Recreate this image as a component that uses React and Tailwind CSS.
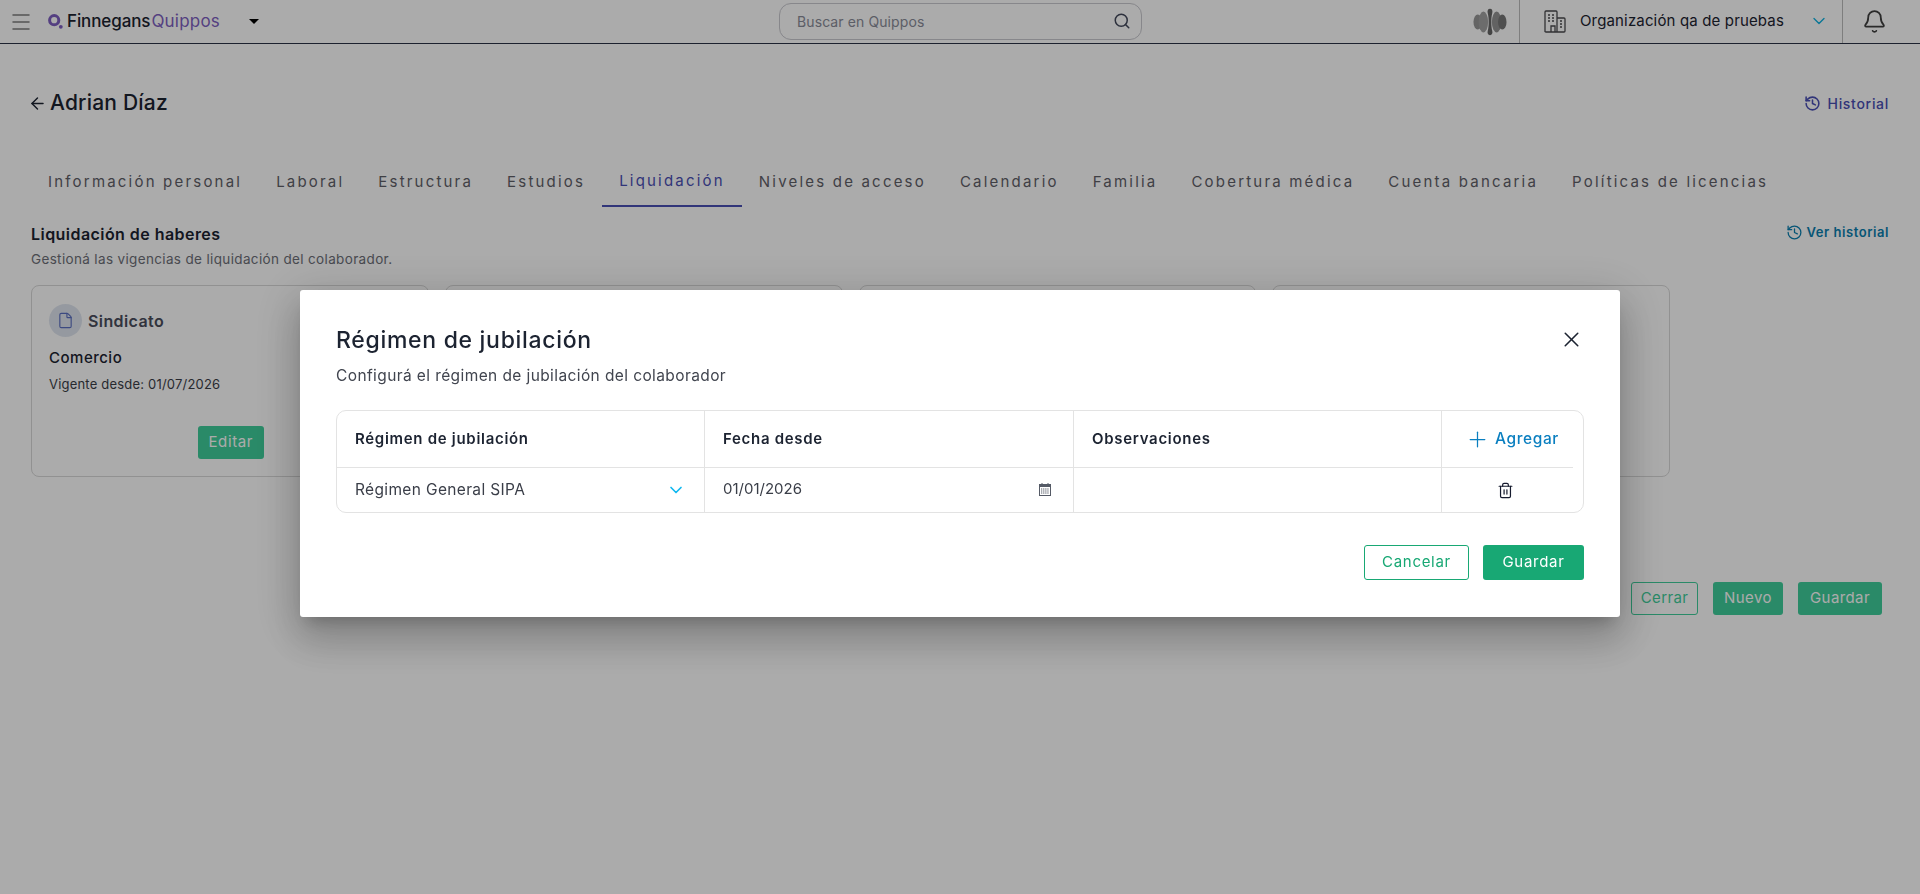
import { ArrowLeft, Bell, ChevronDown, File, History, Menu, Plus, Search, Trash2, X } from 'lucide-react';

const tabs = [
  'Información personal',
  'Laboral',
  'Estructura',
  'Estudios',
  'Liquidación',
  'Niveles de acceso',
  'Calendario',
  'Familia',
  'Cobertura médica',
  'Cuenta bancaria',
  'Políticas de licencias',
];

const LogoMark = () => (
  <svg width="15" height="15" viewBox="0 0 15 15" fill="none">
    <circle cx="6.200" cy="6.200" r="4.600" stroke="#7e5fc0" strokeWidth="3" />
    <circle cx="12.800" cy="12.800" r="1.900" fill="#7e5fc0" />
  </svg>
);

const BrainMark = () => (
  <svg width="34" height="30" viewBox="0 0 36 30">
    <ellipse cx="5" cy="15" rx="4.5" ry="8" fill="#979797" />
    <ellipse cx="11" cy="15" rx="5" ry="11" fill="#a2a2a2" />
    <ellipse cx="25" cy="15" rx="5" ry="11" fill="#939393" />
    <ellipse cx="31" cy="15" rx="4.5" ry="8" fill="#767676" />
    <path d="M18 1c2.200 0 3 2.200 2.400 4.400-.8 3-1 6-1 9.600s.2 6.600 1 9.600C21 26.800 20.200 29 18 29s-3-2.200-2.400-4.400c.8-3 1-6 1-9.600s-.2-6.600-1-9.600C15 3.200 15.800 1 18 1z" fill="#666" />
  </svg>
);

const BuildingIcon = () => (
  <svg width="22" height="23" viewBox="0 0 22 23" fill="none" stroke="#4b4b4f" strokeWidth="1.300">
    <path d="M1 22V2a1 1 0 0 1 1-1h10a1 1 0 0 1 1 1v20M13 8h7a1 1 0 0 1 1 1v12a1 1 0 0 1-1 1H2a1 1 0 0 1-1-1" />
    <path d="M7 22v-6h4v6M4 5h2M8 5h2M4 8h2M8 8h2M4 11h2M8 11h2M16 11h2M16 14h2M16 17h2" />
  </svg>
);

const CalendarIcon = () => (
  <svg width="12" height="13" viewBox="0 0 12 13" fill="none">
    <path d="M3 0v2M9 0v2" stroke="#555a66" strokeWidth="1" />
    <rect x="0.500" y="1.500" width="11" height="11" stroke="#555a66" fill="#fff" />
    <rect x="0.500" y="1.500" width="11" height="2.500" fill="#555a66" />
    <path d="M2 6h8M2 8h8M2 10h8" stroke="#555a66" strokeWidth="1" strokeDasharray="1.300 0.800" />
  </svg>
);

const PageButton = ({ className, children }) => (
  <button className={`h-[33px] rounded-[3px] text-[15px] tracking-[0.4px] ${className}`}>{children}</button>
);

export default function App() {
  return (
    <div className="relative h-[894px] overflow-hidden bg-white font-['Inter','Noto_Sans',sans-serif] text-[#1c2331]">
      <header className="flex h-[44px] items-stretch border-b border-[#2a3245]">
        <div className="flex w-[779px] items-center">
          <Menu className="ml-[9px] h-[24px] w-[24px] text-[#7d7d7d]" strokeWidth={1.500} />
          <div className="ml-[15px] flex items-center">
            <LogoMark />
            <span className="ml-[4px] text-[17px] font-medium tracking-[-0.1px] text-[#1c2331]">Finnegans</span>
            <span className="ml-[1px] text-[17px] tracking-[0.2px] text-[#7e5fc0]">Quippos</span>
          </div>
          <span className="ml-[29px] h-0 w-0 border-x-[5px] border-t-[5px] border-x-transparent border-t-black" />
        </div>
        <div className="my-[3px] flex w-[363px] items-center justify-between rounded-[12px] border border-[#c9c9cf] pb-[1px] pl-[17px] pr-[10px] text-[14px] tracking-[0.1px] text-[#8a8c99]">
          Buscar en Quippos
          <Search className="h-[18px] w-[18px] text-[#444a5c]" strokeWidth={2} />
        </div>
        <div className="ml-auto flex items-center pr-[7px]"><BrainMark /></div>
        <div className="ml-[5px] flex w-[324px] items-center border-x border-[#bdbdbd] pl-[24px] pb-[1px]">
          <BuildingIcon />
          <span className="ml-[14px] text-[15px] tracking-[0.15px]">Organización qa de pruebas</span>
          <ChevronDown className="ml-auto mr-[13px] h-[20px] w-[20px] text-[#0fb2e0]" strokeWidth={1.600} />
        </div>
        <div className="flex w-[77px] items-center justify-center pr-[14px]">
          <Bell className="h-[25px] w-[25px] text-[#3f3f3f]" strokeWidth={1.700} />
        </div>
      </header>

      <main className="px-[31px]">
        <div className="flex h-[118px] items-center justify-between">
          <div className="flex items-center gap-[3px]">
            <ArrowLeft className="-ml-[3px] h-[19px] w-[19px] text-[#1c2331]" strokeWidth={1.800} />
            <h1 className="text-[21px] font-medium tracking-[0.2px]">Adrian Díaz</h1>
          </div>
          <a className="flex items-center gap-[7px] text-[14px] font-medium tracking-[0.7px] text-[#4a4fb5]">
            <History className="h-[17px] w-[17px]" strokeWidth={2.200} />
            Historial
          </a>
        </div>

        <nav className="flex h-[45px] items-stretch">
          {tabs.map((tab) => (
            <div
              key={tab}
              className={`flex items-center px-[17px] pb-[5px] text-[15px] tracking-[2.2px] ${
                tab === 'Liquidación' ? 'border-b-2 border-[#4a4fb5] text-[#4a4fb5]' : 'text-[#5f6068]'
              }`}
            >
              {tab}
            </div>
          ))}
        </nav>

        <section className="mt-[16px] flex items-start justify-between">
          <div>
            <h2 className="text-[16px] font-semibold leading-[22px] tracking-[0.45px]">Liquidación de haberes</h2>
            <p className="mt-[5px] text-[13.500px] leading-[18px] tracking-[0.35px] text-[#6d6f78]">Gestioná las vigencias de liquidación del colaborador.</p>
          </div>
          <a className="flex items-center gap-[4px] text-[13px] font-semibold tracking-[0.55px] text-[#0a7fb0]">
            <History className="h-[17px] w-[17px]" strokeWidth={1.800} />
            Ver historial
          </a>
        </section>

        <div className="mt-[17px] flex gap-[16px]">
          <article className="h-[192px] w-[397.750px] rounded-[8px] border border-[#d9d9d9] px-[17px] pt-[18px]">
            <div className="flex items-center gap-[6px]">
              <span className="flex h-[33px] w-[33px] items-center justify-center rounded-full bg-[#dfe5ef]">
                <File className="h-[17px] w-[17px] text-[#5a6fc0]" strokeWidth={1.600} />
              </span>
              <span className="text-[16px] font-semibold tracking-[0.4px] text-[#4a4d5c]">Sindicato</span>
            </div>
            <p className="mt-[11px] text-[15px] font-medium leading-[20px] tracking-[0.5px]">Comercio</p>
            <p className="mt-[7px] text-[13px] leading-[18px] tracking-[0.2px] text-[#3b3e48]">Vigente desde: 01/07/2026</p>
            <div className="mt-[33px] flex justify-end">
              <button className="mr-[147px] h-[33px] w-[66px] rounded-[3px] bg-[#3fce9b] text-[15px] tracking-[0.6px] text-white">Editar</button>
            </div>
          </article>
          <article className="h-[192px] w-[397.750px] rounded-[8px] border border-[#d9d9d9]" />
          <article className="h-[192px] w-[397.750px] rounded-[8px] border border-[#d9d9d9]" />
          <article className="h-[192px] w-[397.750px] rounded-[8px] border border-[#d9d9d9]" />
        </div>

        <div className="mt-[105px] flex justify-end gap-[15px] pr-[7px]">
          <PageButton className="w-[67px] border border-[#3fce9b] text-[#3fce9b]">Cerrar</PageButton>
          <PageButton className="w-[70px] bg-[#3fce9b] text-white">Nuevo</PageButton>
          <PageButton className="w-[84px] bg-[#3fce9b] text-white">Guardar</PageButton>
        </div>
      </main>

      {/* overlay + modal */}
      <div className="fixed inset-0 bg-black/33" />
      <div className="fixed left-[300px] top-[290px] h-[327px] w-[1320px] rounded-[3px] bg-white px-[36px] pt-[36px] shadow-[0_11px_15px_-7px_rgba(0,0,0,0.2),0_24px_38px_3px_rgba(0,0,0,0.14),0_9px_46px_8px_rgba(0,0,0,0.14)]">
        <div className="flex items-start justify-between">
          <h2 className="text-[23px] font-medium leading-[28px] tracking-[0.7px] text-[#1c2331]">Régimen de jubilación</h2>
          <X className="mt-[1px] h-[25px] w-[25px] text-[#1c2331]" strokeWidth={1.500} />
        </div>
        <p className="mt-[12px] text-[15.500px] leading-[20px] tracking-[0.4px] text-[#41454f]">Configurá el régimen de jubilación del colaborador</p>

        <div className="mt-[24px] h-[103px] rounded-[10px] border border-[#e3e3e3] text-[15px]">
          <div className="grid h-[57px] grid-cols-[368px_369px_368px_1fr] font-semibold tracking-[0.7px]">
            <div className="flex items-center border-r border-b border-[#e3e3e3] pl-[18px]">Régimen de jubilación</div>
            <div className="flex items-center border-r border-b border-[#e3e3e3] pl-[18px]">Fecha desde</div>
            <div className="flex items-center border-r border-b border-[#e3e3e3] pl-[18px]">Observaciones</div>
            <div className="mr-[10px] flex items-center border-b border-[#e3e3e3] pl-[23px] tracking-normal text-[#0a7fc0]">
              <Plus className="h-[25px] w-[25px]" strokeWidth={1.200} />
              <span className="ml-[5px] text-[15.500px] font-medium tracking-[0.6px]">Agregar</span>
            </div>
          </div>
          <div className="grid h-[44px] grid-cols-[368px_369px_368px_1fr] text-[15px]">
            <div className="flex items-center justify-between border-r border-[#e3e3e3] pl-[18px] pr-[18px] text-[15.500px] tracking-[0.35px] text-[#3a3e48]">
              Régimen General SIPA
              <ChevronDown className="h-[20px] w-[20px] text-[#0fb8f0]" strokeWidth={2} />
            </div>
            <div className="flex items-center justify-between border-r border-[#e3e3e3] pl-[18px] pr-[22px] pb-[1px] text-[#3a3e48]">
              01/01/2026
              <CalendarIcon />
            </div>
            <div className="border-r border-[#e3e3e3]" />
            <div className="flex items-center justify-center pr-[15px]">
              <Trash2 className="h-[17px] w-[17px] text-[#161b2e]" strokeWidth={1.700} />
            </div>
          </div>
        </div>

        <div className="mt-[32px] flex justify-end gap-[14px]">
          <button className="h-[35px] w-[105px] rounded-[3px] border border-[#18a874] text-[15px] tracking-[0.7px] text-[#18a874]">Cancelar</button>
          <button className="h-[35px] w-[101px] rounded-[3px] bg-[#18a874] text-[15px] tracking-[0.7px] text-white">Guardar</button>
        </div>
      </div>
    </div>
  );
}
